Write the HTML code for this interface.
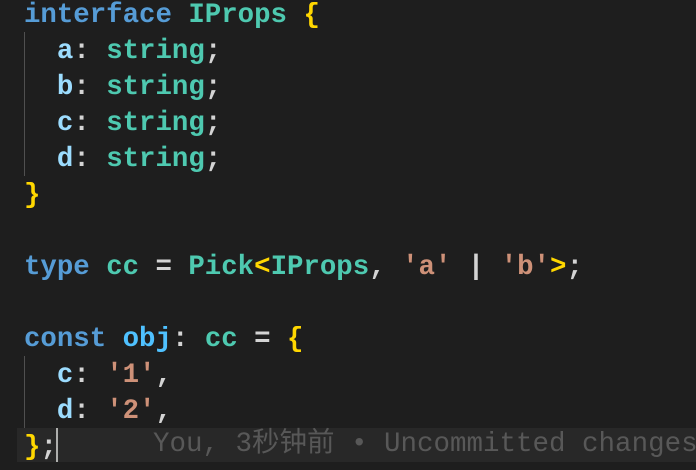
<!DOCTYPE html><html><head><style>
body{margin:0;width:696px;height:470px;background:#1e1e1e;overflow:hidden;position:relative}
.c{position:absolute;left:24px;top:-2px;font:bold 27.4px/36px "Liberation Mono",monospace;color:#d4d4d4;white-space:pre}
.k{color:#569cd6}.t{color:#4ec9b0}.p{color:#9cdcfe}.o{color:#4fc1ff}.s{color:#ce9178}.b{color:#ffd700}
.g{position:absolute;left:24px;width:1px;background:#505050}
.hl{position:absolute;left:17px;top:428px;width:679px;height:34px;background:#282828}
.cur{position:absolute;left:56px;top:428px;width:2px;height:34px;background:#aeafad}
.ann{position:absolute;left:153px;top:428px;font:27.5px/34px "Liberation Mono","Noto Sans CJK SC",monospace;color:#585858;white-space:pre}
</style></head><body>
<div class="hl"></div>
<div class="g" style="top:32px;height:144px"></div>
<div class="g" style="top:356px;height:72px"></div>
<div class="c"><span class="k">interface</span> <span class="t">IProps</span> <span class="b">{</span>
  <span class="p">a</span>: <span class="t">string</span>;
  <span class="p">b</span>: <span class="t">string</span>;
  <span class="p">c</span>: <span class="t">string</span>;
  <span class="p">d</span>: <span class="t">string</span>;
<span class="b">}</span>

<span class="k">type</span> <span class="t">cc</span> = <span class="t">Pick</span><span class="b">&lt;</span><span class="t">IProps</span>, <span class="s">'a'</span> | <span class="s">'b'</span><span class="b">&gt;</span>;

<span class="k">const</span> <span class="o">obj</span>: <span class="t">cc</span> = <span class="b">{</span>
  <span class="p">c</span>: <span class="s">'1'</span>,
  <span class="p">d</span>: <span class="s">'2'</span>,
<span class="b">}</span>;</div>
<div class="cur"></div>
<div class="ann">You, 3秒钟前 • Uncommitted changes</div>
</body></html>
